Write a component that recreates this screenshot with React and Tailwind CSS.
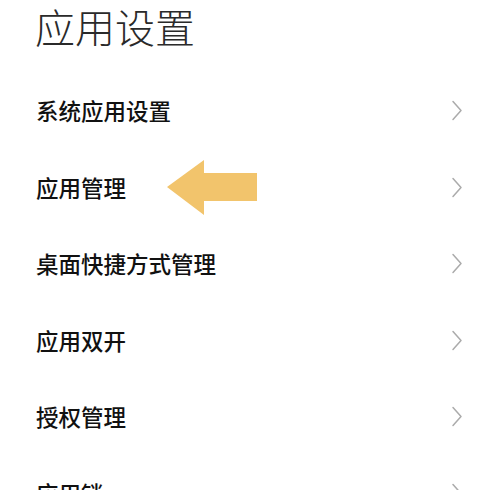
import React from 'react';

const items = ['系统应用设置', '应用管理', '桌面快捷方式管理', '应用双开', '授权管理', '应用锁'];

function Chevron() {
  return (
    <svg width="12" height="22" viewBox="0 0 12 22" fill="none" className="shrink-0">
      <path d="M2 1.5 L10 10.5 L2 19.5" stroke="#ababab" strokeWidth="1.5" strokeLinecap="round" strokeLinejoin="round" />
    </svg>
  );
}

function Arrow() {
  return (
    <svg width="92" height="58" viewBox="0 0 92 58" className="absolute left-[166px] top-[9px]">
      <path d="M1 28 L38 1 L38 14 L91 14 L91 42 L38 42 L38 56 Z" fill="#f2c46c" />
    </svg>
  );
}

export default function App() {
  return (
    <div
      className="h-[490px] w-[500px] overflow-hidden bg-white"
      style={{ fontFamily: '"Noto Sans CJK SC", "Noto Sans", sans-serif' }}
    >
      <h1 className="pl-[35px] pt-[2px] text-[40px] font-light leading-[48px] text-[#2a2a2a]">应用设置</h1>
      <ul className="mt-[23px]">
        {items.map((item) => (
          <li key={item} className="relative flex h-[76.5px] items-center justify-between pl-[36px] pr-[37px]">
            <span className="text-[22.5px] font-medium text-[#111]">{item}</span>
            <Chevron />
            {item === '应用管理' && <Arrow />}
          </li>
        ))}
      </ul>
    </div>
  );
}
